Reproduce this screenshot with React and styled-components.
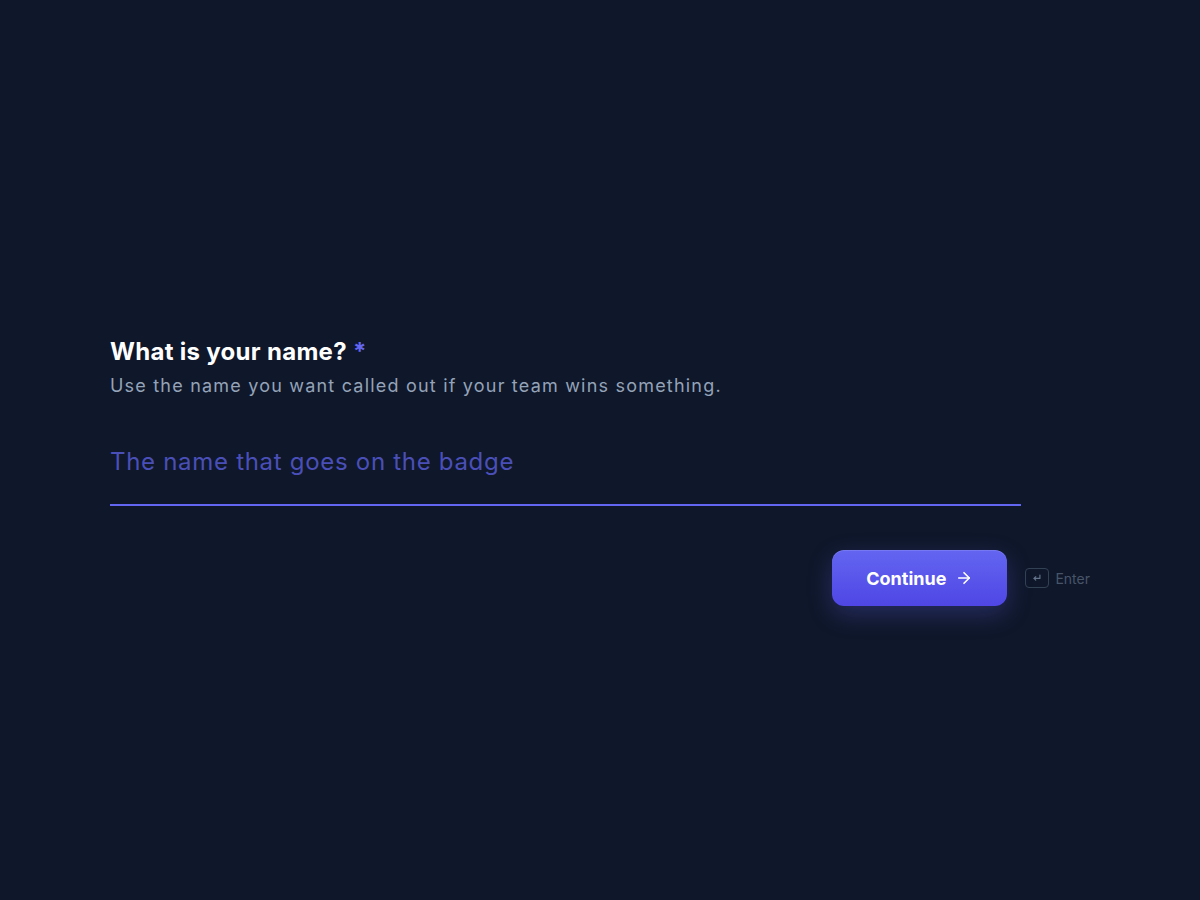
import React from 'react';
import styled, { createGlobalStyle } from 'styled-components';

const GlobalStyle = createGlobalStyle`
  html, body {
    margin: 0;
    padding: 0;
    background: #0f172a;
  }
  body {
    font-family: "Inter", "Noto Sans", sans-serif;
    -webkit-font-smoothing: antialiased;
  }
`;

const Page = styled.div`
  min-height: 900px;
  background: #0f172a;
  box-sizing: border-box;
  padding-top: 336px;
`;

const Question = styled.section`
  max-width: 980px;
  margin: 0 auto;
  display: flex;
  flex-direction: column;
`;

const Title = styled.h1`
  margin: 0;
  font-size: 24px;
  line-height: 32px;
  font-weight: 700;
  color: #ffffff;
  letter-spacing: 0.3px;
`;

const Required = styled.span`
  color: #6366f1;
  margin-left: 6px;
`;

const Hint = styled.p`
  margin: 4px 0 0;
  font-size: 18px;
  line-height: 28px;
  color: #94a3b8;
  letter-spacing: 1.2px;
`;

const NameInput = styled.input`
  margin-top: 45px;
  width: 911px;
  box-sizing: border-box;
  background: transparent;
  border: none;
  border-bottom: 2px solid #6366f1;
  outline: none;
  padding: 0 0 25px;
  font-family: inherit;
  font-size: 24px;
  line-height: 34px;
  color: #ffffff;
  letter-spacing: 0.7px;

  &::placeholder {
    color: #4a4fb8;
    opacity: 1;
  }
`;

const Actions = styled.div`
  margin-top: 44px;
  display: flex;
  align-items: center;
  justify-content: flex-end;
  gap: 18px;
`;

const ContinueButton = styled.button`
  display: flex;
  align-items: center;
  gap: 9px;
  height: 56px;
  padding: 0 34px;
  border: none;
  border-radius: 12px;
  background: linear-gradient(180deg, #6366f1 0%, #4f46e5 100%);
  box-shadow: 0 8px 24px rgba(99, 102, 241, 0.28), inset 0 1px 0 rgba(255, 255, 255, 0.12);
  color: #ffffff;
  font-family: inherit;
  font-size: 18px;
  font-weight: 700;
  cursor: pointer;
`;

const KeyHint = styled.div`
  display: flex;
  align-items: center;
  gap: 6px;
  font-size: 14px;
  color: #475569;
`;

const Kbd = styled.span`
  display: flex;
  align-items: center;
  justify-content: center;
  width: 24px;
  height: 20px;
  box-sizing: border-box;
  border: 1px solid #334155;
  border-radius: 4px;
  color: #64748b;
`;

const ArrowRight = () => (
  <svg width="18" height="18" viewBox="0 0 24 24" fill="none" stroke="currentColor"
    strokeWidth="2.2" strokeLinecap="round" strokeLinejoin="round">
    <path d="M5 12h14" />
    <path d="M12 5l7 7-7 7" />
  </svg>
);

const EnterGlyph = () => (
  <svg width="10" height="10" viewBox="0 0 12 12" fill="none" stroke="currentColor"
    strokeWidth="1.4" strokeLinecap="round" strokeLinejoin="round">
    <path d="M9.5 2.5v4h-7" />
    <path d="M4.5 4.5l-2 2 2 2" />
  </svg>
);

export default function App() {
  return (
    <>
      <GlobalStyle />
      <Page>
        <Question>
          <Title>
            What is your name?<Required>*</Required>
          </Title>
          <Hint>Use the name you want called out if your team wins something.</Hint>
          <NameInput placeholder="The name that goes on the badge" />
          <Actions>
            <ContinueButton>
              Continue
              <ArrowRight />
            </ContinueButton>
            <KeyHint>
              <Kbd><EnterGlyph /></Kbd>
              Enter
            </KeyHint>
          </Actions>
        </Question>
      </Page>
    </>
  );
}
